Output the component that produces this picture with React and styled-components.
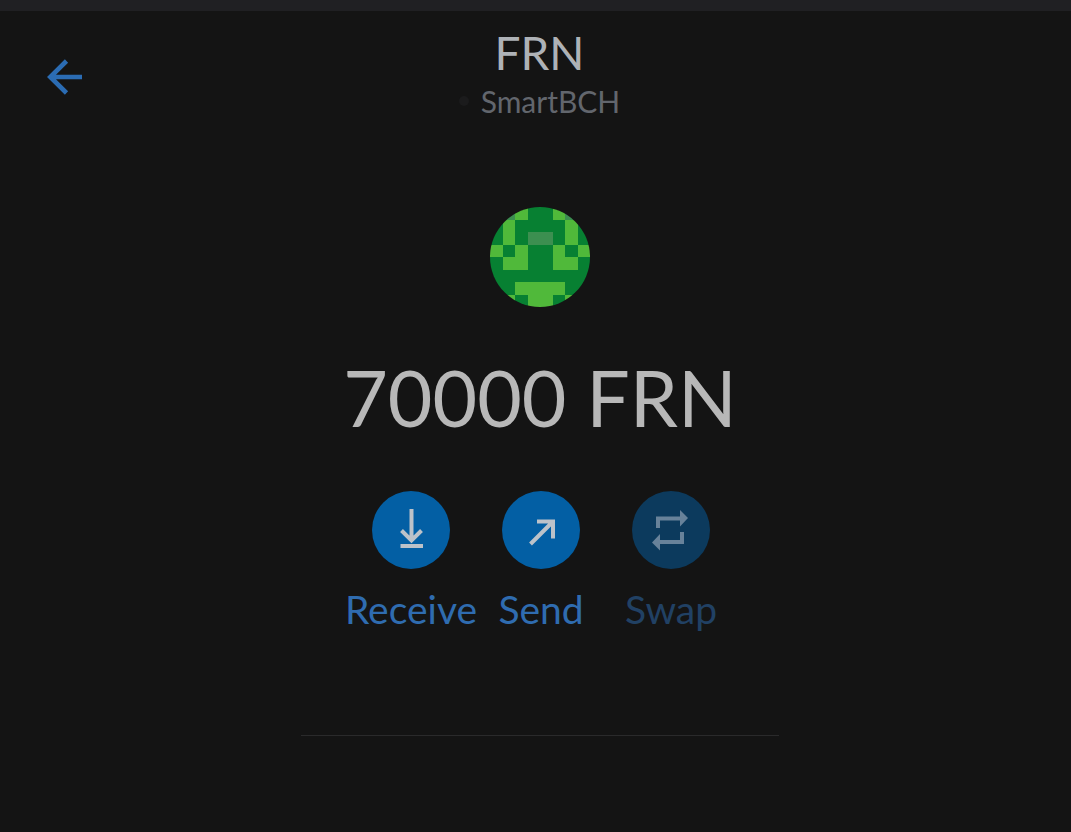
import React from "react";
import styled, {createGlobalStyle} from "styled-components";

const GlobalStyle = createGlobalStyle`
  * {
    box-sizing: border-box;
  }

  body {
    margin: 0;
    background: #141414;
    font-family: Lato, "Open Sans", sans-serif;
  }
`;

const Page = styled.div`
  min-height: 100vh;
`;

const StatusStrip = styled.div`
  height: 11px;
  background: #202023;
`;

const Header = styled.header`
  display: grid;
  grid-template-columns: 1fr auto 1fr;
  align-items: center;
  min-height: 122px;
  padding: 2px 32px 0 40px;
`;

const BackButton = styled.button`
  display: flex;
  justify-self: start;
  padding: 0;
  border: 0;
  background: none;
  color: #2b6cb3;
  cursor: pointer;
  margin-top: 8px;
`;

const HeaderTitle = styled.div`
  display: flex;
  flex-direction: column;
  align-items: center;
`;

const Title = styled.h1`
  margin: 0;
  color: #aeb2b7;
  font-size: 46px;
  font-weight: 400;
  line-height: 56px;
`;

const Network = styled.div`
  display: flex;
  align-items: center;
  gap: 12px;
  color: #62666d;
  font-size: 30px;
  line-height: 40px;
`;

const NetworkDot = styled.span`
  width: 10px;
  height: 10px;
  border-radius: 50%;
  background: #1b1b1c;
`;

const Body = styled.main`
  display: flex;
  flex-direction: column;
  align-items: center;
  padding: 74px 0 0 9px;
`;

const TokenIcon = styled.svg`
  width: 100px;
  height: 100px;
  border-radius: 50%;
`;

const Balance = styled.h2`
  margin: 40px 0 44px;
  color: #b8b8b8;
  font-size: 77px;
  font-weight: 400;
  line-height: 100px;
`;

const Actions = styled.div`
  display: grid;
  grid-template-columns: repeat(3, 130px);
  padding-left: 2px;
`;

const ActionIcon = styled.span`
  display: flex;
  width: 78px;
  height: 78px;
  border-radius: 50%;
  background: #035fa4;
  color: #bcc2c9;
`;

const ActionButton = styled.button`
  display: flex;
  flex-direction: column;
  align-items: center;
  gap: 18px;
  padding: 0;
  border: 0;
  background: none;
  color: #2f6cb0;
  font-family: inherit;
  font-size: 39px;
  line-height: 44px;
  white-space: nowrap;
  cursor: pointer;

  &:disabled {
    color: #214164;
    cursor: default;
  }

  &:disabled ${ActionIcon} {
    background: #0c3a5d;
    color: #68829a;
  }
`;

const Divider = styled.hr`
  width: 45%;
  margin: 104px 0 0;
  border: 0;
  border-top: 1px solid #2a2a2b;
`;

// l - light, d - dark, g - grey
const identicon = [
  "dglddlgd",
  "dlddddld",
  "dldggdld",
  "ldlddldl",
  "dllddlld",
  "dddddddd",
  "ddlllldd",
  "dldlldld",
];

const identiconColors = {
  l: "#50b93a",
  d: "#078032",
  g: "#3c8f50",
};

const Identicon = () => (
  <TokenIcon viewBox="0 0 8 8" shapeRendering="crispEdges" aria-hidden="true">
    {identicon.map((row, y) => row.split("").map((cell, x) => (
      <rect key={`${x}-${y}`} x={x} y={y} width="1" height="1" fill={identiconColors[cell]}/>
    )))}
  </TokenIcon>
);

const BackIcon = () => (
  <svg width="48" height="48" viewBox="0 0 48 48" fill="none" stroke="currentColor" strokeWidth="4.6">
    <path d="M42 24H10M26.5 8L10.3 24L26.5 40"/>
  </svg>
);

const ReceiveIcon = () => (
  <svg width="78" height="78" viewBox="0 0 78 78" fill="none" stroke="currentColor" strokeWidth="4">
    <path d="M39.500 18V49M29.500 39.500L39.500 49.500L49.500 39.500M28.500 55H51"/>
  </svg>
);

const SendIcon = () => (
  <svg width="78" height="78" viewBox="0 0 78 78" fill="none" stroke="currentColor" strokeWidth="4">
    <path d="M28.500 53L50.500 31M35 30.500H51V47.500"/>
  </svg>
);

const SwapIcon = () => (
  <svg width="78" height="78" viewBox="0 0 78 78" fill="currentColor">
    <path d="M24 37V25.500H48V19L56 27L48 35.500V29.500H28V37ZM52 41V53H28V59.500L20 51.500L28 43V49H48V41Z"/>
  </svg>
);

const actions = [
  {title: "Receive", Icon: ReceiveIcon},
  {title: "Send", Icon: SendIcon},
  {title: "Swap", Icon: SwapIcon, disabled: true},
];

const App = () => {
  return (
    <Page>
      <GlobalStyle/>
      <StatusStrip/>
      <Header>
        <BackButton type="button" aria-label="Back">
          <BackIcon/>
        </BackButton>
        <HeaderTitle>
          <Title>FRN</Title>
          <Network>
            <NetworkDot/>
            SmartBCH
          </Network>
        </HeaderTitle>
      </Header>
      <Body>
        <Identicon/>
        <Balance>70000 FRN</Balance>
        <Actions>
          {actions.map(({title, Icon, disabled}) => (
            <ActionButton key={title} type="button" disabled={disabled}>
              <ActionIcon>
                <Icon/>
              </ActionIcon>
              {title}
            </ActionButton>
          ))}
        </Actions>
        <Divider/>
      </Body>
    </Page>
  );
}

export default App;
